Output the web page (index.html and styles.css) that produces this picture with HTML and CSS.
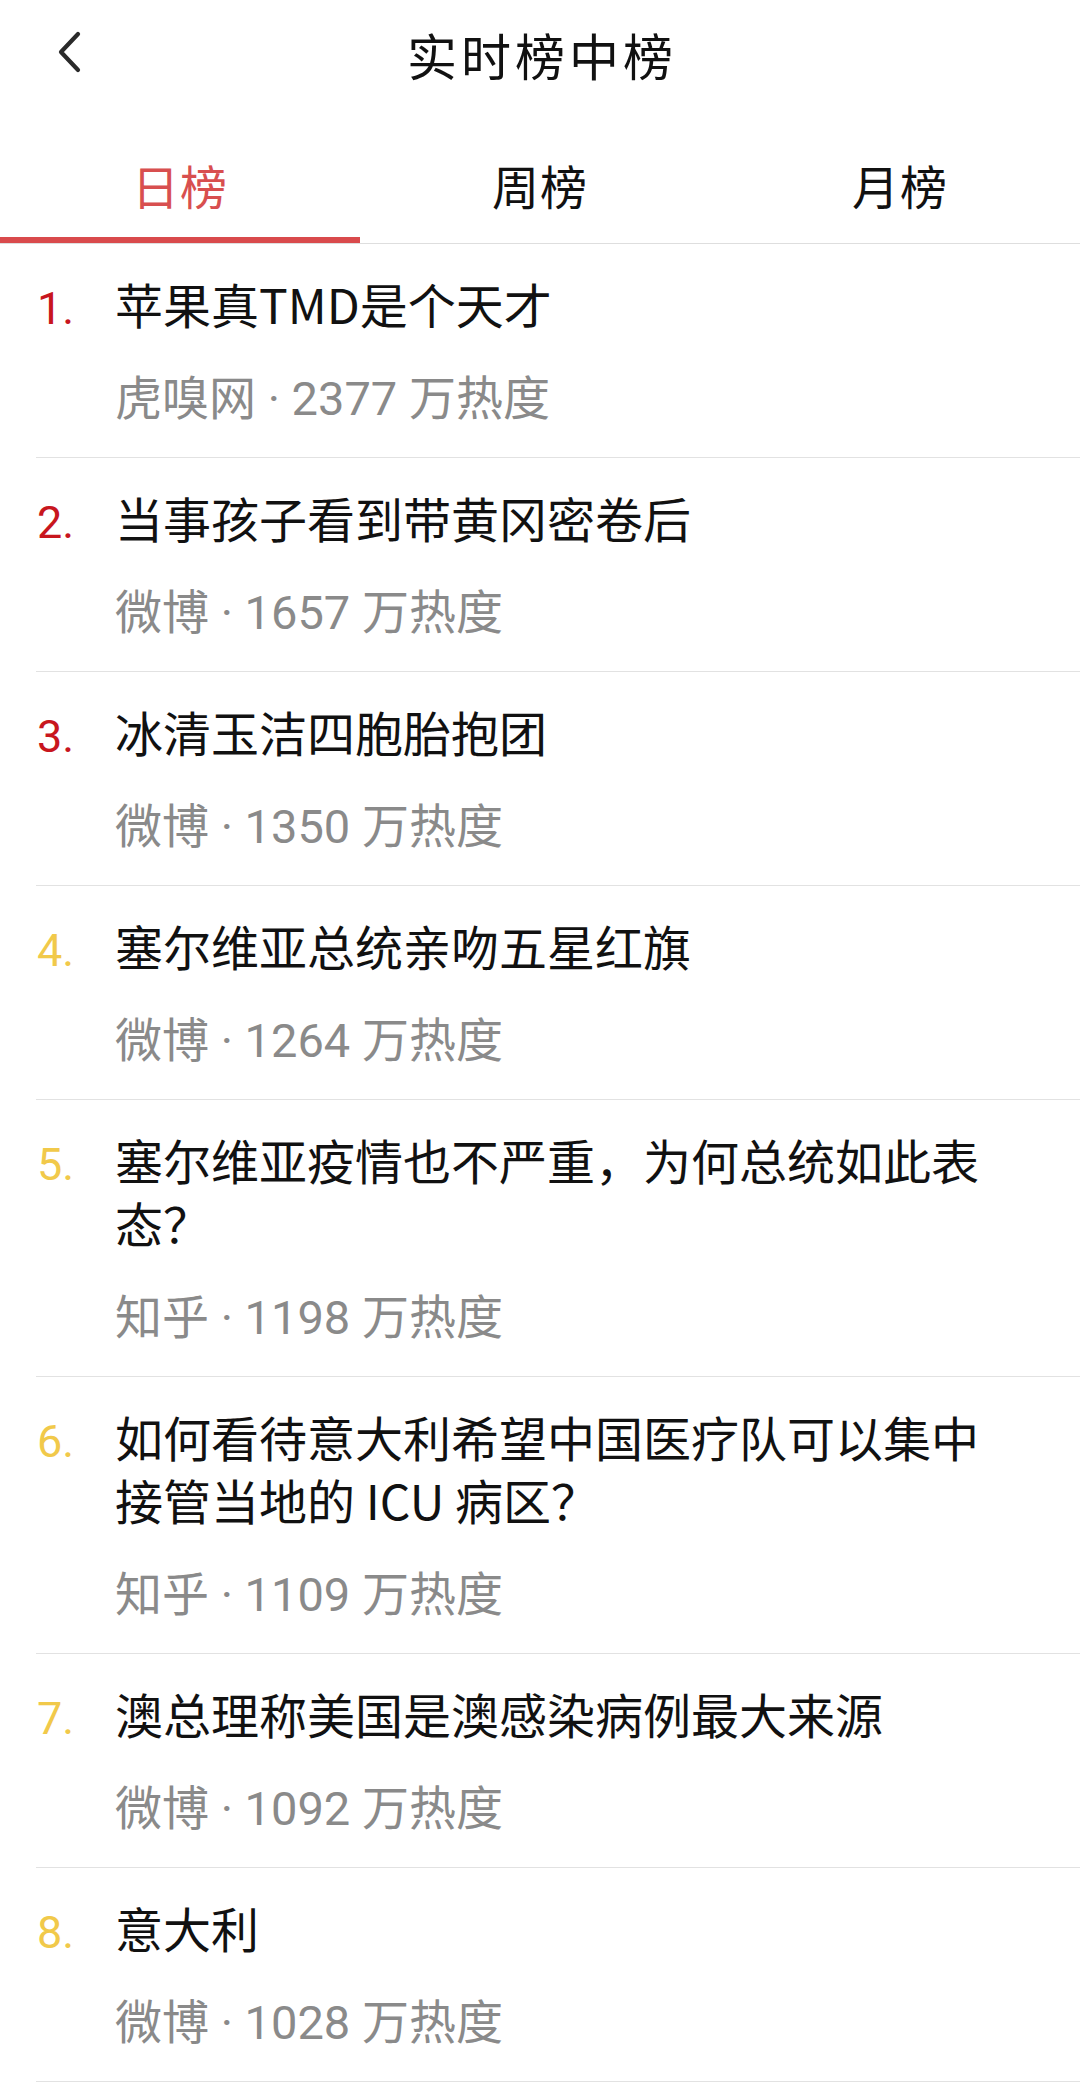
FILE: index.html
```html
<!DOCTYPE html>
<html lang="zh-CN">
<head>
<meta charset="utf-8">
<title>实时榜中榜</title>
<link rel="stylesheet" href="styles.css">
</head>
<body>
<div class="page">
  <header class="topbar">
    <span class="back">
      <svg width="28" height="42" viewBox="0 0 28 42" aria-hidden="true">
        <polyline points="22,3 5,21 22,39" fill="none" stroke="#2a2a2a" stroke-width="4.2" stroke-linecap="round" stroke-linejoin="round"/>
      </svg>
    </span>
    <h1 class="title">实时榜中榜</h1>
  </header>
  <nav class="tabs">
    <div class="tab active"><span class="tab-label">日榜</span></div>
    <div class="tab"><span class="tab-label">周榜</span></div>
    <div class="tab"><span class="tab-label">月榜</span></div>
  </nav>
  <ul class="list">
    <li class="item"><span class="rank hot">1.</span><div class="body"><div class="headline">苹果真TMD是个天才</div><div class="meta">虎嗅网 · 2377 万热度</div></div></li>
    <li class="item"><span class="rank hot">2.</span><div class="body"><div class="headline">当事孩子看到带黄冈密卷后</div><div class="meta">微博 · 1657 万热度</div></div></li>
    <li class="item"><span class="rank hot">3.</span><div class="body"><div class="headline">冰清玉洁四胞胎抱团</div><div class="meta">微博 · 1350 万热度</div></div></li>
    <li class="item"><span class="rank warm">4.</span><div class="body"><div class="headline">塞尔维亚总统亲吻五星红旗</div><div class="meta">微博 · 1264 万热度</div></div></li>
    <li class="item"><span class="rank warm">5.</span><div class="body"><div class="headline">塞尔维亚疫情也不严重，为何总统如此表态？</div><div class="meta">知乎 · 1198 万热度</div></div></li>
    <li class="item"><span class="rank warm">6.</span><div class="body"><div class="headline">如何看待意大利希望中国医疗队可以集中接管当地的 ICU 病区？</div><div class="meta">知乎 · 1109 万热度</div></div></li>
    <li class="item"><span class="rank warm">7.</span><div class="body"><div class="headline">澳总理称美国是澳感染病例最大来源</div><div class="meta">微博 · 1092 万热度</div></div></li>
    <li class="item"><span class="rank warm">8.</span><div class="body"><div class="headline">意大利</div><div class="meta">微博 · 1028 万热度</div></div></li>
  </ul>
</div>
</body>
</html>
```
FILE: styles.css
```css
* { box-sizing: border-box; }
html, body {
  margin: 0;
  padding: 0;
  background: #ffffff;
}
body {
  font-family: Roboto, "Noto Sans CJK SC", sans-serif;
  color: #111111;
  width: 1080px;
  overflow: hidden;
}
.page {
  width: 1080px;
}
.topbar {
  position: relative;
  height: 108px;
  display: flex;
  align-items: center;
  justify-content: center;
}
.back {
  position: absolute;
  left: 56px;
  top: 31px;
  width: 28px;
  height: 42px;
  display: block;
}
.back svg { display: block; }
.title {
  margin: 0;
  font-family: "Noto Sans CJK SC", sans-serif;
  font-weight: 400;
  font-size: 50px;
  line-height: 108px;
  letter-spacing: 4px;
  padding-left: 4px;
  color: #111;
}
.tabs {
  display: flex;
  height: 136px;
  border-bottom: 1px solid #dedede;
}
.tab {
  flex: 1;
  display: flex;
  justify-content: center;
  padding-top: 46px;
  border-bottom: 6px solid transparent;
}
.tab-label {
  font-family: "Noto Sans CJK SC", sans-serif;
  font-size: 47px;
  line-height: 62px;
  letter-spacing: 1px;
  color: #111;
}
.tab.active { border-bottom-color: #d94a4c; }
.tab.active .tab-label { color: #d84f4f; }
.list {
  list-style: none;
  margin: 0;
  padding: 0;
}
.item {
  display: flex;
  align-items: baseline;
  margin-left: 36px;
  padding: 28px 0 28px 0;
  border-bottom: 1px solid #e2e2e2;
}
.rank {
  width: 79px;
  flex: none;
  padding-left: 1px;
  font-family: Roboto, sans-serif;
  font-size: 45px;
  line-height: 63px;
}
.rank.hot { color: #c8161e; }
.rank.warm { color: #f1c94a; }
.body {
  flex: 1;
  padding-right: 70px;
}
.headline {
  font-family: "Noto Sans CJK SC", sans-serif;
  font-size: 48px;
  line-height: 63px;
  color: #111;
}
.meta {
  margin-top: 33px;
  font-family: Roboto, "Noto Sans CJK SC", sans-serif;
  font-size: 47px;
  line-height: 61px;
  color: #8a8a8a;
}
```
